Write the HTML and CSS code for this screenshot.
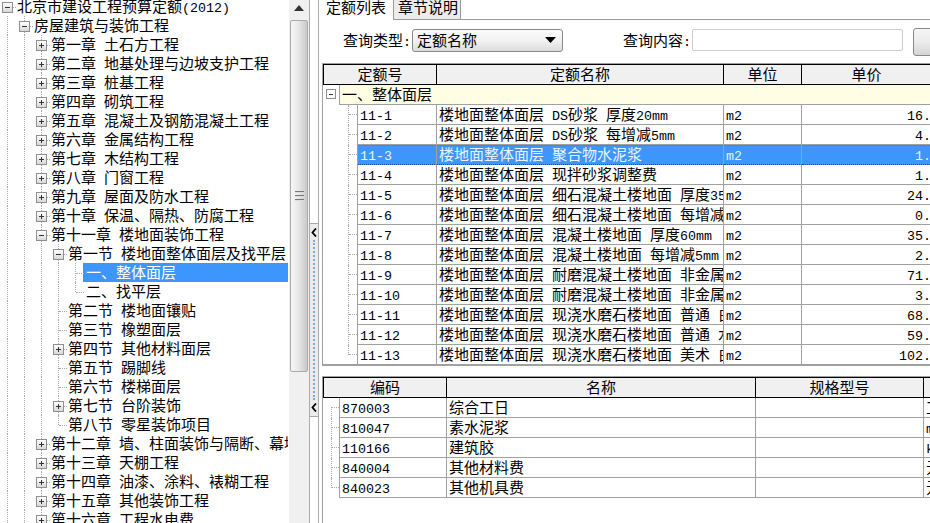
FILE: index.html
```html
<!DOCTYPE html>
<html lang="zh">
<head>
<meta charset="utf-8">
<title>定额列表</title>
<link rel="stylesheet" href="styles.css">
</head>
<body>
<div class="app">
  <div class="tree">
    <div class="row"><i class="e first"><b class="box"></b></i><span class="t">北京市建设工程预算定额<span class="m">(2012)</span></span></div>
    <div class="row"><i class="g"></i><i class="e"><b class="box"></b></i><span class="t">房屋建筑与装饰工程</span></div>
    <div class="row"><i class="g"></i><i class="g"></i><i class="e"><b class="box plus"></b></i><span class="t">第一章<span class="m"> </span>土石方工程</span></div>
    <div class="row"><i class="g"></i><i class="g"></i><i class="e"><b class="box plus"></b></i><span class="t">第二章<span class="m"> </span>地基处理与边坡支护工程</span></div>
    <div class="row"><i class="g"></i><i class="g"></i><i class="e"><b class="box plus"></b></i><span class="t">第三章<span class="m"> </span>桩基工程</span></div>
    <div class="row"><i class="g"></i><i class="g"></i><i class="e"><b class="box plus"></b></i><span class="t">第四章<span class="m"> </span>砌筑工程</span></div>
    <div class="row"><i class="g"></i><i class="g"></i><i class="e"><b class="box plus"></b></i><span class="t">第五章<span class="m"> </span>混凝土及钢筋混凝土工程</span></div>
    <div class="row"><i class="g"></i><i class="g"></i><i class="e"><b class="box plus"></b></i><span class="t">第六章<span class="m"> </span>金属结构工程</span></div>
    <div class="row"><i class="g"></i><i class="g"></i><i class="e"><b class="box plus"></b></i><span class="t">第七章<span class="m"> </span>木结构工程</span></div>
    <div class="row"><i class="g"></i><i class="g"></i><i class="e"><b class="box plus"></b></i><span class="t">第八章<span class="m"> </span>门窗工程</span></div>
    <div class="row"><i class="g"></i><i class="g"></i><i class="e"><b class="box plus"></b></i><span class="t">第九章<span class="m"> </span>屋面及防水工程</span></div>
    <div class="row"><i class="g"></i><i class="g"></i><i class="e"><b class="box plus"></b></i><span class="t">第十章<span class="m"> </span>保温、隔热、防腐工程</span></div>
    <div class="row"><i class="g"></i><i class="g"></i><i class="e"><b class="box"></b></i><span class="t">第十一章<span class="m"> </span>楼地面装饰工程</span></div>
    <div class="row"><i class="g"></i><i class="g"></i><i class="g"></i><i class="e"><b class="box"></b></i><span class="t">第一节<span class="m"> </span>楼地面整体面层及找平层</span></div>
    <div class="row"><i class="g"></i><i class="g"></i><i class="g"></i><i class="g"></i><i class="c"></i><span class="t sel">一、整体面层</span></div>
    <div class="row"><i class="g"></i><i class="g"></i><i class="g"></i><i class="g"></i><i class="c end"></i><span class="t leaf">二、找平层</span></div>
    <div class="row"><i class="g"></i><i class="g"></i><i class="g"></i><i class="c"></i><span class="t">第二节<span class="m"> </span>楼地面镶贴</span></div>
    <div class="row"><i class="g"></i><i class="g"></i><i class="g"></i><i class="c"></i><span class="t">第三节<span class="m"> </span>橡塑面层</span></div>
    <div class="row"><i class="g"></i><i class="g"></i><i class="g"></i><i class="e"><b class="box plus"></b></i><span class="t">第四节<span class="m"> </span>其他材料面层</span></div>
    <div class="row"><i class="g"></i><i class="g"></i><i class="g"></i><i class="c"></i><span class="t">第五节<span class="m"> </span>踢脚线</span></div>
    <div class="row"><i class="g"></i><i class="g"></i><i class="g"></i><i class="c"></i><span class="t">第六节<span class="m"> </span>楼梯面层</span></div>
    <div class="row"><i class="g"></i><i class="g"></i><i class="g"></i><i class="e"><b class="box plus"></b></i><span class="t">第七节<span class="m"> </span>台阶装饰</span></div>
    <div class="row"><i class="g"></i><i class="g"></i><i class="g"></i><i class="c end"></i><span class="t">第八节<span class="m"> </span>零星装饰项目</span></div>
    <div class="row"><i class="g"></i><i class="g"></i><i class="e"><b class="box plus"></b></i><span class="t">第十二章<span class="m"> </span>墙、柱面装饰与隔断、幕墙工程</span></div>
    <div class="row"><i class="g"></i><i class="g"></i><i class="e"><b class="box plus"></b></i><span class="t">第十三章<span class="m"> </span>天棚工程</span></div>
    <div class="row"><i class="g"></i><i class="g"></i><i class="e"><b class="box plus"></b></i><span class="t">第十四章<span class="m"> </span>油漆、涂料、裱糊工程</span></div>
    <div class="row"><i class="g"></i><i class="g"></i><i class="e"><b class="box plus"></b></i><span class="t">第十五章<span class="m"> </span>其他装饰工程</span></div>
    <div class="row"><i class="g"></i><i class="g"></i><i class="e"><b class="box plus"></b></i><span class="t">第十六章<span class="m"> </span>工程水电费</span></div>
  </div>

  <div class="scrollbar">
    <div class="sb-btn"><svg width="10" height="6" viewBox="0 0 10 6"><path d="M5 0L10 6H0z" fill="#333"/></svg></div>
    <div class="thumb"><span class="grip"></span></div>
  </div>

  <div class="splitter">
    <div class="sp-top"></div>
    <div class="sp-ctl">
      <svg width="6" height="9" viewBox="0 0 6 9"><path d="M5 0.5L1.5 4.5L5 8.5" fill="none" stroke="#000" stroke-width="1.8"/></svg>
      <span class="sp-dots"></span>
      <svg width="6" height="9" viewBox="0 0 6 9"><path d="M5 0.5L1.5 4.5L5 8.5" fill="none" stroke="#000" stroke-width="1.8"/></svg>
    </div>
    <div class="sp-bottom"></div>
  </div>

  <div class="main">
    <div class="tabs">
      <div class="tab active">定额列表</div>
      <div class="tab">章节说明</div>
      <div class="tab-fill"></div>
    </div>

    <div class="query">
      <span class="label">查询类型<span class="m">:</span></span>
      <div class="select"><span>定额名称</span><svg width="11" height="6" viewBox="0 0 11 6"><path d="M0 0H11L5.5 6z" fill="#000"/></svg></div>
      <span class="label second">查询内容<span class="m">:</span></span>
      <div class="input"></div>
      <div class="button"></div>
    </div>

    <div class="panel list">
      <table class="grid">
        <colgroup><col class="w17"><col class="w18"><col class="w79"><col class="w287"><col class="w78"><col class="w130"></colgroup>
        <thead><tr><th colspan="3">定额号</th><th>定额名称</th><th>单位</th><th>单价</th></tr></thead>
        <tbody>
          <tr class="group"><td class="gexp"><b class="box"></b></td><td colspan="5">一、整体面层</td></tr>
          <tr><td class="lead" colspan="2"><i class="hook"></i></td><td class="m">11-1</td><td>楼地面整体面层<span class="m"> DS</span>砂浆<span class="m"> </span>厚度<span class="m">20mm</span></td><td class="m">m2</td><td class="num m">16.</td></tr>
          <tr><td class="lead" colspan="2"><i class="hook"></i></td><td class="m">11-2</td><td>楼地面整体面层<span class="m"> DS</span>砂浆<span class="m"> </span>每增减<span class="m">5mm</span></td><td class="m">m2</td><td class="num m">4.</td></tr>
          <tr class="selected"><td class="lead" colspan="2"><i class="hook"></i></td><td class="m">11-3</td><td>楼地面整体面层<span class="m"> </span>聚合物水泥浆</td><td class="m">m2</td><td class="num m">1.</td></tr>
          <tr><td class="lead" colspan="2"><i class="hook"></i></td><td class="m">11-4</td><td>楼地面整体面层<span class="m"> </span>现拌砂浆调整费</td><td class="m">m2</td><td class="num m">1.</td></tr>
          <tr><td class="lead" colspan="2"><i class="hook"></i></td><td class="m">11-5</td><td>楼地面整体面层<span class="m"> </span>细石混凝土楼地面<span class="m"> </span>厚度<span class="m">35mm</span></td><td class="m">m2</td><td class="num m">24.</td></tr>
          <tr><td class="lead" colspan="2"><i class="hook"></i></td><td class="m">11-6</td><td>楼地面整体面层<span class="m"> </span>细石混凝土楼地面<span class="m"> </span>每增减<span class="m">5mm</span></td><td class="m">m2</td><td class="num m">0.</td></tr>
          <tr><td class="lead" colspan="2"><i class="hook"></i></td><td class="m">11-7</td><td>楼地面整体面层<span class="m"> </span>混凝土楼地面<span class="m"> </span>厚度<span class="m">60mm</span></td><td class="m">m2</td><td class="num m">35.</td></tr>
          <tr><td class="lead" colspan="2"><i class="hook"></i></td><td class="m">11-8</td><td>楼地面整体面层<span class="m"> </span>混凝土楼地面<span class="m"> </span>每增减<span class="m">5mm</span></td><td class="m">m2</td><td class="num m">2.</td></tr>
          <tr><td class="lead" colspan="2"><i class="hook"></i></td><td class="m">11-9</td><td>楼地面整体面层<span class="m"> </span>耐磨混凝土楼地面<span class="m"> </span>非金属骨料</td><td class="m">m2</td><td class="num m">71.</td></tr>
          <tr><td class="lead" colspan="2"><i class="hook"></i></td><td class="m">11-10</td><td>楼地面整体面层<span class="m"> </span>耐磨混凝土楼地面<span class="m"> </span>非金属骨料</td><td class="m">m2</td><td class="num m">3.</td></tr>
          <tr><td class="lead" colspan="2"><i class="hook"></i></td><td class="m">11-11</td><td>楼地面整体面层<span class="m"> </span>现浇水磨石楼地面<span class="m"> </span>普通<span class="m"> </span>白水泥</td><td class="m">m2</td><td class="num m">68.</td></tr>
          <tr><td class="lead" colspan="2"><i class="hook"></i></td><td class="m">11-12</td><td>楼地面整体面层<span class="m"> </span>现浇水磨石楼地面<span class="m"> </span>普通<span class="m"> </span>水泥</td><td class="m">m2</td><td class="num m">59.</td></tr>
          <tr><td class="lead" colspan="2"><i class="hook last"></i></td><td class="m">11-13</td><td>楼地面整体面层<span class="m"> </span>现浇水磨石楼地面<span class="m"> </span>美术<span class="m"> </span>白水泥</td><td class="m">m2</td><td class="num m">102.</td></tr>
        </tbody>
      </table>
    </div>

    <div class="panel detail">
      <table class="grid">
        <colgroup><col class="w17"><col class="w107"><col class="w309"><col class="w168"><col class="w100"></colgroup>
        <thead><tr><th colspan="2">编码</th><th>名称</th><th>规格型号</th><th>单位</th></tr></thead>
        <tbody>
          <tr><td class="lead"><i class="hook start"></i></td><td class="m">870003</td><td>综合工日</td><td></td><td>工日</td></tr>
          <tr><td class="lead"><i class="hook"></i></td><td class="m">810047</td><td>素水泥浆</td><td></td><td class="m">m3</td></tr>
          <tr><td class="lead"><i class="hook"></i></td><td class="m">110166</td><td>建筑胶</td><td></td><td class="m">kg</td></tr>
          <tr><td class="lead"><i class="hook"></i></td><td class="m">840004</td><td>其他材料费</td><td></td><td>元</td></tr>
          <tr><td class="lead"><i class="hook last"></i></td><td class="m">840023</td><td>其他机具费</td><td></td><td>元</td></tr>
        </tbody>
      </table>
    </div>
  </div>
</div>
</body>
</html>
```

FILE: styles.css
```css
* { box-sizing: border-box; }
html, body { margin: 0; height: 100%; overflow: hidden; background: #fff; }
body {
  font: 15px/19px "Noto Sans CJK SC", sans-serif;
  color: #000;
  white-space: nowrap;
}
.m { font-family: "Liberation Mono", monospace; font-size: 13.33px; }
span.m { line-height: 0; }

.app { display: flex; width: 930px; height: 523px; overflow: hidden; }

/* tree */
.tree { width: 289px; flex: none; margin-top: -3px; overflow: hidden; padding-right: 1px; }
.row { display: flex; height: 19px; }
.row i { font-style: normal; }
.g, .c, .e { position: relative; width: 17px; flex: none; }
.g::before, .c::before, .e::before {
  content: ""; position: absolute; left: 7px; top: 0; bottom: 0;
  border-left: 1px dotted #aaa;
}
.c::after, .e::after {
  content: ""; position: absolute; left: 8px; top: 10px; width: 8px;
  border-top: 1px dotted #aaa;
}
.end::before { bottom: 9px; }
.first::before { display: none; }
.box {
  position: absolute; left: 2px; top: 5px; width: 11px; height: 11px; z-index: 1;
  border: 1px solid #8f8f8f;
  background:
    linear-gradient(#333, #333) center / 5px 1px no-repeat,
    linear-gradient(#fff, #d8d8d8);
}
.box.plus {
  background:
    linear-gradient(#333, #333) center / 5px 1px no-repeat,
    linear-gradient(#333, #333) center / 1px 5px no-repeat,
    linear-gradient(#fff, #d8d8d8);
}
.t { min-width: 0; flex: 1; overflow: hidden; height: 19px; line-height: 17px; }
.sel {
  margin-left: -2px; padding-left: 3px;
  background: #3d96fb; color: #fff;
}
.leaf { margin-left: -2px; padding-left: 3px; }

/* scrollbar */
.scrollbar {
  width: 20px; flex: none; background: #f0f0f0;
  display: flex; flex-direction: column; align-items: center;
}
.sb-btn { height: 20px; width: 100%; flex: none; display: flex; align-items: center; justify-content: center; padding-bottom: 4px; }
.thumb {
  width: 18px; height: 352px; flex: none;
  border: 1px solid #aaa; border-radius: 2px;
  background: linear-gradient(90deg, #f6f6f6, #e8e8e8 45%, #c9c9c9);
  display: flex; align-items: center; justify-content: center;
}
.grip {
  width: 9px; height: 10px;
  background: repeating-linear-gradient(#777 0 1px, #ddd 1px 2px, transparent 2px 4px);
}

/* splitter */
.splitter {
  width: 10px; flex: none;
  border-left: 1px solid #aaa; border-right: 1px solid #aaa;
  display: flex; flex-direction: column;
}
.sp-top { height: 223px; flex: none; }
.sp-ctl {
  height: 194px; flex: none; background: #ececec;
  border-top: 1px solid #aaa; border-bottom: 1px solid #aaa;
  display: flex; flex-direction: column; align-items: center; padding: 4px 0;
}
.sp-dots { flex: 1; width: 0; margin: 3px 0; border-left: 2px dotted #7fa9d6; }
.sp-bottom { flex: 1; }

/* right side */
.main { flex: 1; min-width: 0; margin-left: 3px; overflow: hidden; display: flex; flex-direction: column; }
.tabs { display: flex; height: 20px; flex: none; }
.tab { height: 20px; padding: 0 4px; line-height: 14px; }
.tab.active { width: 71px; }
.tab:not(.active) { width: 68px; background: #ececec; border: 1px solid #999; border-top: 0; }
.tab-fill { flex: 1; border-bottom: 1px solid #999; }

.query { height: 43px; flex: none; display: flex; align-items: flex-start; padding: 9px 0 0 21px; }
.label { width: 69px; flex: none; line-height: 21px; }
.second { margin-left: 60px; }
.select {
  width: 151px; height: 23px; flex: none;
  border: 1px solid #888; border-radius: 3px;
  background: linear-gradient(#fafafa, #f2f2f2 50%, #dcdcdc);
  display: flex; align-items: center; justify-content: space-between;
  padding: 0 6px 2px 4px; line-height: 19px;
}
.input { width: 211px; height: 22px; flex: none; border: 1px solid #ccc; border-radius: 2px; }
.button {
  width: 60px; height: 28px; flex: none; margin: -1px 0 0 10px;
  border: 1px solid #888; border-radius: 3px;
  background: linear-gradient(#f5f5f5, #ececec 50%, #d4d4d4);
}

.panel { border-left: 1px solid #a0a0a0; border-top: 1px solid #a0a0a0; flex: none; width: 700px; overflow: hidden; }
.list { height: 303px; border-bottom: 2px solid #a0a0a0; }
.detail { flex: 1; margin-top: 10px; }

.grid { table-layout: fixed; border-collapse: separate; border-spacing: 0; width: 0; }
.w17 { width: 17px; } .w18 { width: 18px; } .w79 { width: 79px; } .w287 { width: 287px; }
.w78 { width: 78px; } .w130 { width: 130px; } .w107 { width: 107px; } .w309 { width: 309px; }
.w168 { width: 168px; } .w100 { width: 100px; }

.grid th {
  height: 21px; padding: 0 0 2px; font-weight: 400; line-height: 17px;
  background: #f0f0f0;
  border-top: 1px solid #000; border-bottom: 1px solid #000; border-right: 1px solid #000;
}
.grid th:first-child { border-left: 1px solid #000; }
.grid td {
  height: 20px; padding: 0 0 2px 2px; overflow: hidden; line-height: 17px;
  border-bottom: 1px solid #a0a0a0; border-right: 1px solid #a0a0a0;
}
.grid td.m { padding-top: 4px; padding-bottom: 0; line-height: 15px; }
.grid td.num { text-align: right; padding-left: 0; padding-right: 0; }
.grid td.lead { border-bottom: 0; padding: 0; position: relative; }
.group td { background: #fffde3; }
.group td.gexp { background: #fff; border-bottom: 0; border-right: 1px solid #a0a0a0; padding: 0; position: relative; }
.gexp .box { left: 3px; top: 4px; width: 10px; height: 10px; background: linear-gradient(#333, #333) center / 4px 1px no-repeat, #fff; }
.hook { position: absolute; left: 25px; top: 0; bottom: 0; width: 9px; }
.detail .hook { left: 8px; width: 8px; }
.hook::before { content: ""; position: absolute; left: 0; top: 0; bottom: 0; border-left: 1px dotted #aaa; }
.hook::after { content: ""; position: absolute; left: 1px; right: 0; top: 9px; border-top: 1px dotted #aaa; }
.hook.last::before { bottom: 10px; }
.hook.start::before { top: 9px; }
.selected td:not(.lead) {
  background: #3d96fb; color: #e8f3ff;
  border-bottom: 1px dotted #1f4f86;
  box-shadow: inset 0 1px 0 #6d7f95;
}
```
